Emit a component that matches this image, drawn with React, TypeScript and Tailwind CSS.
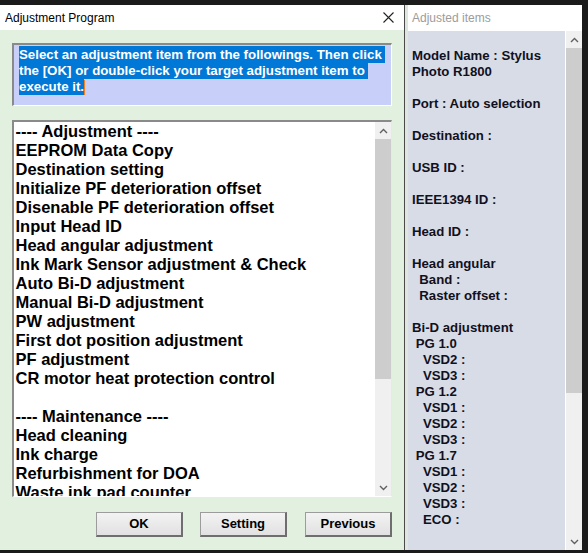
const adjustmentItems = [
  "---- Adjustment ----",
  "EEPROM Data Copy",
  "Destination setting",
  "Initialize PF deterioration offset",
  "Disenable PF deterioration offset",
  "Input Head ID",
  "Head angular adjustment",
  "Ink Mark Sensor adjustment & Check",
  "Auto Bi-D adjustment",
  "Manual Bi-D adjustment",
  "PW adjustment",
  "First dot position adjustment",
  "PF adjustment",
  "CR motor heat protection control",
  "",
  "---- Maintenance ----",
  "Head cleaning",
  "Ink charge",
  "Refurbishment for DOA",
  "Waste ink pad counter",
];

// lines shown in the "Adjusted items" panel (leading spaces are the indent)
const adjustedLines = [
  "Model Name : Stylus",
  "Photo R1800",
  "",
  "Port : Auto selection",
  "",
  "Destination :",
  "",
  "USB ID :",
  "",
  "IEEE1394 ID :",
  "",
  "Head ID :",
  "",
  "Head angular",
  "  Band :",
  "  Raster offset :",
  "",
  "Bi-D adjustment",
  " PG 1.0",
  "   VSD2 :",
  "   VSD3 :",
  " PG 1.2",
  "   VSD1 :",
  "   VSD2 :",
  "   VSD3 :",
  " PG 1.7",
  "   VSD1 :",
  "   VSD2 :",
  "   VSD3 :",
  "   ECO :",
];

function Chevron({ up }: { up?: boolean }) {
  return (
    <svg width="9" height="6" viewBox="0 0 9 6">
      <polyline
        points={up ? "1,5 4.5,1.5 8,5" : "1,1 4.5,4.5 8,1"}
        fill="none"
        stroke="#606060"
        strokeWidth="1.4"
      />
    </svg>
  );
}

function Button({ label, className }: { label: string; className?: string }) {
  return (
    <div
      className={`w-[87px] h-[25px] flex items-center justify-center text-[13px] font-bold text-black bg-gradient-to-b from-[#f3f3f3] to-[#e1e1e1] border-t border-l border-[#9c9c9c] border-r-2 border-b-2 border-r-[#6e6e6e] border-b-[#6e6e6e] ${className ?? ""}`}
    >
      {label}
    </div>
  );
}

export default function App() {
  return (
    <div className="w-[588px] h-[553px] bg-[#1b1b1b] pt-[5px] flex overflow-hidden font-['Liberation_Sans',Arial,sans-serif]">
      {/* Adjustment Program dialog */}
      <div className="w-[404px] h-[545px] flex flex-col bg-[#e2f0e0] shrink-0">
        <div className="h-[25px] bg-white flex items-center justify-between pl-[5px] pr-[10px]">
          <span className="text-[12px] text-black">Adjustment Program</span>
          <svg width="11" height="11" viewBox="0 0 11 11">
            <path d="M0.5 0.5 L10.5 10.5 M10.5 0.5 L0.5 10.5" stroke="#222" strokeWidth="1.1" />
          </svg>
        </div>

        <div className="flex flex-col px-[12px]">
          <div className="mt-[13px] h-[63px] bg-[#c8d0fa] border-t-2 border-l-2 border-[#8a8a8a] border-r border-b border-r-white border-b-white pl-[5px] pt-[2px]">
            <p className="text-[13.3px] leading-[16px] font-bold text-white">
              <span className="bg-[#0078d7] py-[0.6px]">
                Select an adjustment item from the followings. Then click&nbsp;
              </span>
              <br />
              <span className="bg-[#0078d7] py-[0.6px]">
                the [OK] or double-click your target adjustment item to&nbsp;
              </span>
              <br />
              <span className="bg-[#0078d7] py-[0.6px]">execute it.</span>
              <span className="inline-block w-[1px] h-[15px] bg-[#f08020] align-middle" />
            </p>
          </div>

          <div className="mt-[14px] h-[377px] bg-white border-t-2 border-l-2 border-[#8a8a8a] border-r border-b border-r-[#e8e8e8] border-b-white flex overflow-hidden">
            <div className="flex-1 overflow-hidden pl-[1.5px]">
              {adjustmentItems.map((item, index) => (
                <div
                  key={index}
                  className="h-[19px] leading-[19px] text-[16.5px] font-bold text-black whitespace-nowrap"
                >
                  {item}
                </div>
              ))}
            </div>
            <div className="w-[16px] bg-[#f0f0f0] flex flex-col">
              <div className="h-[17px] flex items-center justify-center">
                <Chevron up />
              </div>
              <div className="h-[240px] bg-[#cdcdcd]" />
              <div className="flex-1" />
              <div className="h-[17px] flex items-center justify-center">
                <Chevron />
              </div>
            </div>
          </div>

          <div className="mt-[15px] flex">
            <Button label="OK" className="ml-[84px]" />
            <Button label="Setting" className="ml-[17px]" />
            <Button label="Previous" className="ml-[18px]" />
          </div>
        </div>
      </div>

      {/* window edge behind */}
      <div className="w-[1px] h-[545px] bg-[#4a4a4a] shrink-0" />
      <div className="w-[3px] h-[545px] bg-[#dfe6df] shrink-0" />

      {/* Adjusted items panel */}
      <div className="w-[174px] h-[545px] flex flex-col shrink-0">
        <div className="h-[26px] bg-white flex items-center pl-[4px]">
          <span className="text-[12px] text-[#9c9c9c]">Adjusted items</span>
        </div>
        <div className="flex-1 flex overflow-hidden">
          <div className="flex-1 bg-[#d8dce6] pl-[4px] pt-[17px] overflow-hidden">
            {adjustedLines.map((line, index) => (
              <div
                key={index}
                className="h-[16px] leading-[16px] text-[13.2px] font-bold text-[#101022] whitespace-pre"
              >
                {line}
              </div>
            ))}
          </div>
          <div className="w-[17px] bg-[#f0f0f0] border-l border-white flex flex-col">
            <div className="h-[17px] flex items-center justify-center">
              <Chevron up />
            </div>
            <div className="h-[345px] bg-[#cdcdcd]" />
            <div className="flex-1" />
            <div className="h-[17px] flex items-center justify-center">
              <Chevron />
            </div>
          </div>
        </div>
      </div>
    </div>
  );
}
